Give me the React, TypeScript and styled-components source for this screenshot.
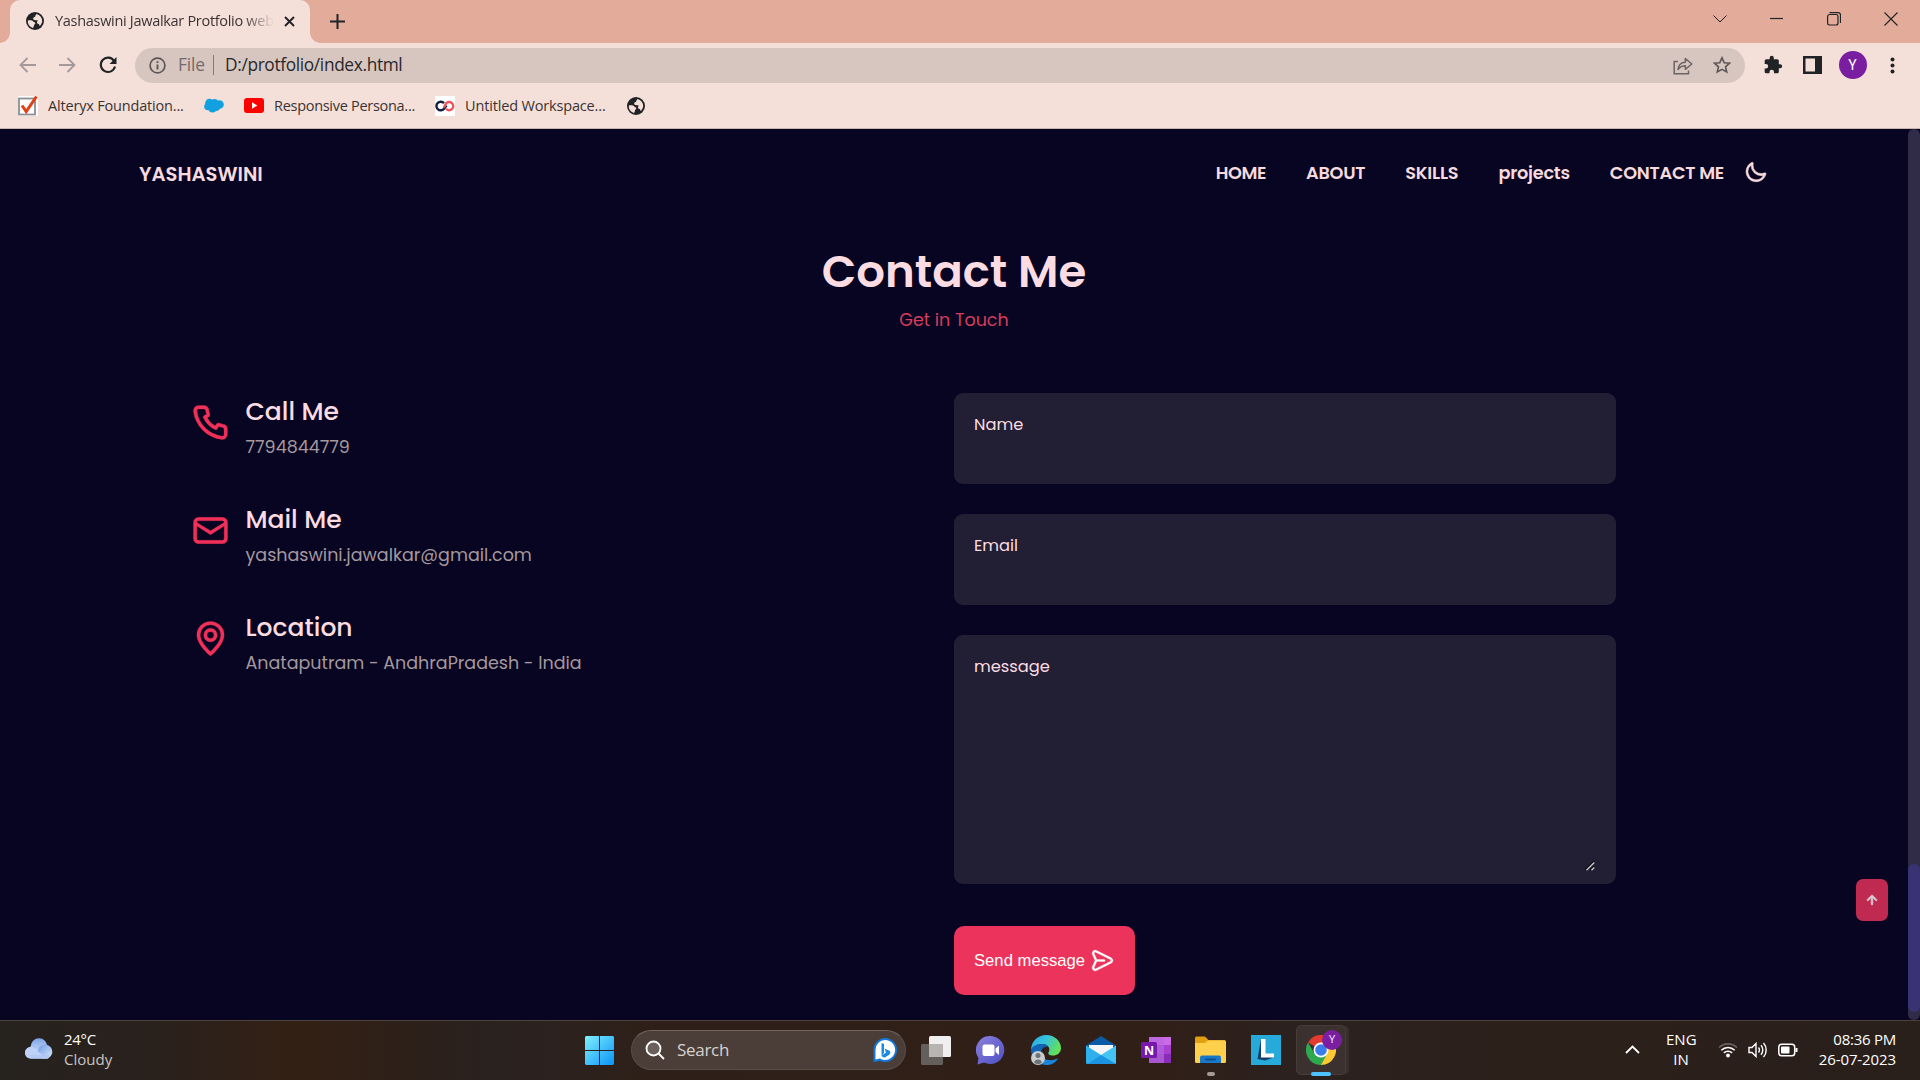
import React from "react";
import styled, { createGlobalStyle } from "styled-components";

const poppins = `Poppins, Inter, "Liberation Sans", sans-serif`;
const segoe = `"Segoe UI", "Open Sans", "Noto Sans", sans-serif`;

const GlobalStyle = createGlobalStyle`
  * { box-sizing: border-box; margin: 0; padding: 0; }
  body { width: 1920px; height: 1080px; overflow: hidden; background: #070521; }
`;

const Screen = styled.div`
  width: 1920px;
  height: 1080px;
  display: flex;
  flex-direction: column;
  overflow: hidden;
`;

const Text = styled.span<{ $ls?: number }>`
  letter-spacing: ${(p) => p.$ls ?? 0}px;
  white-space: nowrap;
`;

/* ---------- browser chrome ---------- */

const TabStrip = styled.div`
  height: 43px;
  display: flex;
  align-items: stretch;
  background: #e3ac9a;
`;

const Tab = styled.div`
  position: relative;
  margin-left: 10px;
  width: 300px;
  display: flex;
  align-items: center;
  padding: 0 14px 1px 16px;
  background: #f5e0d9;
  border-radius: 10px 10px 0 0;
  &::before, &::after {
    content: "";
    position: absolute;
    bottom: 0;
    width: 10px;
    height: 10px;
  }
  &::before { left: -10px; background: radial-gradient(circle at 0 0, #e3ac9a 9.5px, #f5e0d9 10px); }
  &::after { right: -10px; background: radial-gradient(circle at 100% 0, #e3ac9a 9.5px, #f5e0d9 10px); }
`;

const TabTitle = styled.div`
  width: 219px;
  margin-left: 11px;
  margin-right: 10px;
  white-space: nowrap;
  font: 14.5px/22px ${segoe};
  color: #3a3334;
  -webkit-mask-image: linear-gradient(90deg, #000 86%, transparent 100%);
  mask-image: linear-gradient(90deg, #000 86%, transparent 100%);
`;

const NewTab = styled.div`
  display: flex;
  align-items: center;
  margin-left: 20px;
  padding-bottom: 1px;
`;

const WindowControls = styled.div`
  margin-left: auto;
  display: flex;
  align-items: center;
  padding: 0 1px 6px 0;
`;

const WindowButton = styled.div<{ $w: number }>`
  width: ${(p) => p.$w}px;
  display: flex;
  justify-content: center;
`;

const Toolbar = styled.div`
  height: 44px;
  display: flex;
  align-items: center;
  padding-left: 15px;
  background: #f5e0d9;
`;

const ToolButton = styled.div<{ $w: number; $after?: number }>`
  width: ${(p) => p.$w}px;
  margin-right: ${(p) => p.$after ?? 0}px;
  display: flex;
  justify-content: center;
  flex: none;
`;

const Omnibox = styled.div`
  width: 1610px;
  height: 35px;
  border-radius: 18px;
  background: #d7c6bf;
  display: flex;
  align-items: center;
  padding: 0 14px 0 14px;
  font: 17.3px/24px ${segoe};
  color: #27282b;
`;

const Scheme = styled(Text)`
  margin-left: 12px;
  width: 35px;
  color: #74696a;
`;

const SchemeBar = styled.div`
  width: 1px;
  height: 20px;
  background: #83797a;
  margin-right: 11px;
`;

const OmniActions = styled.div`
  margin-left: auto;
  display: flex;
  gap: 20px;
  align-items: center;
`;

const Avatar = styled.div`
  width: 28px;
  height: 28px;
  border-radius: 50%;
  background: #7a1ea1;
  color: #fff;
  font: 14px/28px Roboto, sans-serif;
  text-align: center;
`;

const Bookmarks = styled.div`
  height: 42px;
  display: flex;
  align-items: center;
  padding: 0 0 4px 18px;
  background: #f5e0d9;
  border-bottom: 1px solid #c6b5af;
  font: 14.5px/22px ${segoe};
  color: #3a3334;
`;

const Bookmark = styled.div<{ $w: number }>`
  width: ${(p) => p.$w}px;
  display: flex;
  align-items: center;
  gap: 10px;
`;

/* ---------- page ---------- */

const Viewport = styled.div`
  height: 891px;
  display: flex;
  background: #070521;
  font-family: ${poppins};
  color: #fbdce2;
`;

const Page = styled.main`
  width: 1908px;
  position: relative;
`;

const Nav = styled.nav`
  height: 89px;
  padding: 0 140px 0 139px;
  display: flex;
  align-items: center;
  justify-content: space-between;
`;

const Logo = styled(Text)`
  font-size: 19.6px;
  font-weight: 600;
  color: #f6dadf;
`;

const NavLinks = styled.div`
  display: flex;
  align-items: center;
  gap: 40px;
  padding-bottom: 2px;
  font-size: 17.7px;
  font-weight: 600;
  color: #f6dadf;
`;

const ThemeToggle = styled.div`
  display: flex;
  width: 24px;
  margin-left: -20px;
  margin-top: -2px;
`;

const Heading = styled.header`
  display: flex;
  flex-direction: column;
  align-items: center;
  padding-top: 18px;
`;

const Title = styled.h1`
  font-size: 45px;
  line-height: 72px;
  height: 70px;
  font-weight: 600;
`;

const Subtitle = styled.p`
  font-size: 17.5px;
  line-height: 28px;
  color: #d93c5e;
`;

const Columns = styled.section`
  display: grid;
  grid-template-columns: 764px 662px;
  padding: 59px 0 0 190px;
`;

const ContactList = styled.div`
  display: flex;
  flex-direction: column;
`;

const ContactItem = styled.div`
  height: 108px;
  display: grid;
  grid-template-columns: 55.5px 1fr;
  svg { margin-top: 9px; }
`;

const ContactTitle = styled.h3`
  font-size: 25px;
  line-height: 38px;
  font-weight: 500;
`;

const ContactSub = styled.p`
  font-size: 17.5px;
  line-height: 30px;
  padding-top: 1px;
  color: #a5989f;
`;

const Form = styled.form`
  display: flex;
  flex-direction: column;
  gap: 30px;
`;

const Field = styled.label<{ $h: number }>`
  height: ${(p) => p.$h}px;
  display: flex;
  flex-direction: column;
  justify-content: space-between;
  padding: 20px;
  border-radius: 9px;
  background: #221e34;
  font-size: 16.25px;
  line-height: 24px;
`;

const Grip = styled.div`
  display: flex;
  justify-content: flex-end;
  margin: 0 1px -7px 0;
`;

const SendButton = styled.div`
  margin-top: 12px;
  width: 181px;
  height: 69px;
  border-radius: 10px;
  background: #ec335b;
  color: #fff;
  display: flex;
  align-items: center;
  gap: 5px;
  padding-left: 20px;
  font: 16.67px/24px "Liberation Sans", Arial, sans-serif;
  svg { margin-bottom: 1px; }
`;

const ScrollUp = styled.div`
  position: absolute;
  right: 20px;
  bottom: 99px;
  width: 32px;
  height: 42px;
  border-radius: 7px;
  background: #c02a50;
  display: flex;
  align-items: center;
  justify-content: center;
`;

const ScrollTrack = styled.div`
  width: 12px;
  border-radius: 8px;
  background: #302c48;
  padding-top: 735px;
`;

const ScrollThumb = styled.div`
  height: 148px;
  border-radius: 8px;
  background: #393373;
`;

/* ---------- taskbar ---------- */

const Taskbar = styled.footer`
  height: 60px;
  display: grid;
  grid-template-columns: 572px 776px 572px;
  border-top: 1px solid #4a423b;
  background: linear-gradient(90deg, #26221f 0, #2a211c 160px, #332014 300px, #2b201b 440px, #2a2220 500px, #2e2019 640px, #301f17 1150px, #2b211e 1290px, #2c201a 1550px, #291f1b 1920px);
  color: #fff;
  font: 15px/20px ${segoe};
`;

const Weather = styled.div`
  display: flex;
  align-items: center;
  gap: 9px;
  padding: 0 0 4px 25px;
`;

const Stack = styled.div<{ $align: string }>`
  display: flex;
  flex-direction: column;
  align-items: ${(p) => p.$align};
`;

const Muted = styled(Text)`
  color: #c9c4c1;
`;

const Apps = styled.div`
  display: flex;
  align-items: center;
  padding-bottom: 1px;
`;

const AppSlot = styled.div`
  position: relative;
  width: 55px;
  height: 58px;
  display: flex;
  align-items: center;
  justify-content: center;
  flex: none;
`;

const ActivePlate = styled.div`
  position: absolute;
  inset: 4px 2px 4px 3px;
  border-radius: 5px;
  background: #3b322f;
  border: 1px solid #463d39;
  box-shadow: 4px 0 0 -1px #382f2b;
`;

const Indicator = styled.div<{ $w: number; $c: string }>`
  position: absolute;
  bottom: 3px;
  left: 50%;
  margin-left: ${(p) => -p.$w / 2}px;
  width: ${(p) => p.$w}px;
  height: 4px;
  border-radius: 2px;
  background: ${(p) => p.$c};
`;

const Badge = styled.div`
  position: absolute;
  left: 29px;
  top: 9px;
  width: 20px;
  height: 20px;
  border-radius: 50%;
  background: #7b1fa2;
  color: #eadcf0;
  font: 11px/20px Roboto, sans-serif;
  text-align: center;
`;

const AppIcon = styled.svg`
  position: relative;
  display: block;
`;

const SearchBox = styled.div`
  width: 275px;
  height: 40px;
  margin: 0 2px 0 4px;
  border-radius: 20px;
  background: #4b3e39;
  border: 1px solid #5a4d48;
  border-top-color: #74665f;
  display: flex;
  align-items: center;
  padding: 0 7px 0 13px;
  font-size: 17px;
  color: #d8d2cf;
`;

const SearchLabel = styled(Text)`
  margin-left: 12px;
  flex: 1;
`;

const Tray = styled.div`
  display: flex;
  align-items: center;
  justify-content: flex-end;
  padding: 0 24px 3px 0;
`;

const TrayIcons = styled.div`
  display: flex;
  gap: 10px;
  margin: 2px 0 0 22px;
`;

const Lang = styled(Text)`
  width: 30px;
  margin-left: 26px;
  text-align: center;
`;

const Clock = styled(Stack)`
  width: 98px;
`;

/* ---------- icons ---------- */

const Unicon = ({ d, size, color, bold = 0 }: { d: string; size: number; color: string; bold?: number }) => (
  <svg width={size} height={size} viewBox="0 0 24 24" fill={color} stroke={color} strokeWidth={bold}>
    <path d={d} />
  </svg>
);

const paths = {
  phone:
    "M19.44,13c-.22,0-.45-.07-.67-.12a9.44,9.44,0,0,1-1.31-.39,2,2,0,0,0-2.48,1l-.22.45a12.18,12.18,0,0,1-2.66-2,12.18,12.18,0,0,1-2-2.66L10.52,9a2,2,0,0,0,1-2.48,10.33,10.33,0,0,1-.39-1.31c-.05-.22-.09-.45-.12-.68a3,3,0,0,0-3-2.49h-3a3,3,0,0,0-3,3.41A19,19,0,0,0,18.53,21.91l.38,0a3,3,0,0,0,2-.76,3,3,0,0,0,1-2.25v-3A3,3,0,0,0,19.44,13Zm.5,6a1,1,0,0,1-.34.75,1.05,1.05,0,0,1-.82.25A17,17,0,0,1,4.07,5.22a1.09,1.09,0,0,1,.25-.82,1,1,0,0,1,.75-.34h3a1,1,0,0,1,1,.79q.06.41.15.81a11.12,11.12,0,0,0,.46,1.55l-1.4.65a1,1,0,0,0-.49,1.33,14.49,14.49,0,0,0,7,7,1,1,0,0,0,.76,0,1,1,0,0,0,.57-.52l.62-1.4a13.69,13.69,0,0,0,1.58.46q.4.09.81.15a1,1,0,0,1,.79,1Z",
  mail: "M19,4.3H5a3,3,0,0,0-3,3V16.7a3,3,0,0,0,3,3H19a3,3,0,0,0,3-3V7.3A3,3,0,0,0,19,4.3ZM5,6.3H19a1,1,0,0,1,1,1L12,12.2,4,7.3A1,1,0,0,1,5,6.3ZM20,16.7a1,1,0,0,1-1,1H5a1,1,0,0,1-1-1V9.3l7.5,4.9a1,1,0,0,0,1,0L20,9.3Z",
  pin: "M12,2A8,8,0,0,0,4,9.92c0,5.48,7.05,11.58,7.35,11.84a1,1,0,0,0,1.3,0C13,21.5,20,15.4,20,9.92A8,8,0,0,0,12,2Zm0,17.65c-1.67-1.59-6-6-6-9.73a6,6,0,0,1,12,0C18,13.7,13.67,18.06,12,19.65ZM12,6a4,4,0,1,0,4,4A4,4,0,0,0,12,6Zm0,6a2,2,0,1,1,2-2A2,2,0,0,1,12,12Z",
  send: "M20.34,9.32l-14-7a3,3,0,0,0-4.08,3.9l2.4,5.37h0a1.06,1.06,0,0,1,0,.82l-2.4,5.37A3,3,0,0,0,5,22a3.14,3.14,0,0,0,1.35-.32l14-7a3,3,0,0,0,0-5.36Zm-.89,3.57-14,7a1,1,0,0,1-1.35-1.3l2.39-5.37A2,2,0,0,0,6.57,13h6.89a1,1,0,0,0,0-2H6.57a2,2,0,0,0-.08-.22L4.1,5.41a1,1,0,0,1,1.35-1.3l14,7a1,1,0,0,1,0,1.78Z",
  moon: "M21.64,13a1,1,0,0,0-1.05-.14,8.05,8.05,0,0,1-3.37.73A8.15,8.15,0,0,1,9.08,5.49a8.59,8.59,0,0,1,.25-2A1,1,0,0,0,8,2.36,10.14,10.14,0,1,0,22,14.05,1,1,0,0,0,21.64,13Zm-9.5,6.69A8.14,8.14,0,0,1,7.08,5.22v.27A10.15,10.15,0,0,0,17.22,15.63a9.79,9.79,0,0,0,2.1-.22A8.11,8.11,0,0,1,12.14,19.73Z",
  up: "M17.71,11.29l-5-5a1,1,0,0,0-.33-.21,1,1,0,0,0-.76,0,1,1,0,0,0-.33.21l-5,5a1,1,0,0,0,1.42,1.42L11,9.41V17a1,1,0,0,0,2,0V9.41l3.29,3.3a1,1,0,0,0,1.42,0A1,1,0,0,0,17.71,11.29Z",
};

const Globe = () => (
  <svg width="18" height="18" viewBox="0 0 18 18">
    <circle cx="9" cy="9" r="9" fill="#202225" />
    <path d="M1.8 8.500C4.500 8 6.600 8.400 7.400 9.700 8 10.300 9.300 10.200 9.300 11.200 9.300 12.300 8.200 12.200 8 13.200 7.900 14.300 7.600 15.300 6.900 15.900A7.200 7.200 0 0 1 1.800 8.500Z" fill="#f5e0d9" />
    <path d="M10.500 2A7.200 7.200 0 0 1 16.200 9.500C15.800 11.300 15 12.800 13.800 13.900 13 13.500 13.600 12.300 12.700 11.900 11.700 11.900 10.800 11.300 11 10.200 11.100 9 12.200 9 11.400 8.200 10.300 8 8.600 8.600 7.400 7.500 6.800 6.300 7.500 5.200 8.700 5 9.700 4.700 9 3.300 10.500 2Z" fill="#f5e0d9" />
  </svg>
);

const Stroke = ({ w, h, d, sw = 1.6, c = "#202225" }: { w: number; h: number; d: string; sw?: number; c?: string }) => (
  <svg width={w} height={h} viewBox={`0 0 ${w} ${h}`} fill="none" stroke={c} strokeWidth={sw}>
    <path d={d} />
  </svg>
);

const contacts = [
  { icon: paths.phone, title: "Call Me", sub: "7794844779" },
  { icon: paths.mail, title: "Mail Me", sub: "yashaswini.jawalkar@gmail.com" },
  { icon: paths.pin, title: "Location", sub: "Anataputram - AndhraPradesh - India" },
];

const links = [
  { label: "HOME", ls: -0.4 },
  { label: "ABOUT", ls: -0.25 },
  { label: "SKILLS", ls: -0.2 },
  { label: "projects", ls: -0.25 },
  { label: "CONTACT ME", ls: -0.25 },
];

const Browser = () => (
  <>
    <TabStrip>
      <Tab>
        <Globe />
        <TabTitle><Text $ls={-0.3}>Yashaswini Jawalkar Protfolio web</Text></TabTitle>
        <Stroke w={11} h={11} d="M1 1 10 10M10 1 1 10" sw={1.9} />
      </Tab>
      <NewTab><Stroke w={15} h={15} d="M7.500 0V15M0 7.500H15" sw={2} /></NewTab>
      <WindowControls>
        <WindowButton $w={57}><Stroke w={14} h={8} d="M.5.5 7 7 13.500.5" sw={1} /></WindowButton>
        <WindowButton $w={57}><Stroke w={14} h={3} d="M0 1.500H13" sw={1.2} /></WindowButton>
        <WindowButton $w={57}><Stroke w={14} h={14} d="M2.500.6H11a2.500 2.500 0 0 1 2.500 2.500V11M2.500 2.500H9A2 2 0 0 1 11 4.500V11A2 2 0 0 1 9 13H2.500A2 2 0 0 1 .6 11V4.500A2 2 0 0 1 2.500 2.500Z" sw={1.2} /></WindowButton>
        <WindowButton $w={57}><Stroke w={14} h={14} d="M.5.5 13.500 13.500M13.500.5.5 13.500" sw={1.1} /></WindowButton>
      </WindowControls>
    </TabStrip>
    <Toolbar>
      <ToolButton $w={25}><Stroke w={18} h={16} d="M17 8H1.500M8.500 1 1.500 8 8.500 15" sw={1.8} c="#a4989a" /></ToolButton>
      <ToolButton $w={54}><Stroke w={18} h={16} d="M1 8H16.500M9.500 1 16.500 8 9.500 15" sw={1.8} c="#a4989a" /></ToolButton>
      <ToolButton $w={27} $after={14}>
        <svg width="18" height="18" viewBox="0 0 18 18">
          <path d="M15 4.800A7.200 7.200 0 1 0 16 10.500" fill="none" stroke="#202225" strokeWidth="2.100" />
          <path d="M17.500 1V8H10.500Z" fill="#202225" />
        </svg>
      </ToolButton>
      <Omnibox>
        <svg width="17" height="17" viewBox="0 0 17 17" fill="none" stroke="#5d5658" strokeWidth="1.700">
          <circle cx="8.500" cy="8.500" r="7.400" />
          <path d="M8.500 7.500V12.500M8.500 4.300V6" strokeWidth="1.900" />
        </svg>
        <Scheme $ls={-0.1}>File</Scheme>
        <SchemeBar />
        <Text $ls={-0.34}>D:/protfolio/index.html</Text>
        <OmniActions>
          <svg width="20" height="19" viewBox="0 0 20 19" fill="none" stroke="#6c6465" strokeWidth="1.500">
            <path d="M5 5.500H1.200V17.800H15.500V14.500" />
            <path d="M5 13.500C5.500 9 8 6.500 12.300 6.300V2.500L18.800 8 12.300 13.300V9.800C9 9.800 7 11 5 13.500Z" strokeLinejoin="round" />
          </svg>
          <svg width="18" height="18" viewBox="0 0 18 18" fill="none" stroke="#5d5658" strokeWidth="1.600">
            <path d="M9 1.800 11.200 6.700 16.500 7.200 12.500 10.800 13.700 16 9 13.300 4.300 16 5.500 10.800 1.500 7.200 6.800 6.700Z" />
          </svg>
        </OmniActions>
      </Omnibox>
      <ToolButton $w={55}>
        <svg width="20" height="20" viewBox="0 0 24 24" fill="#202225">
          <path d="M20.500 11H19V7a2 2 0 0 0-2-2h-4V3.500a2.500 2.500 0 0 0-5 0V5H4a2 2 0 0 0-2 2v3.800h1.500a2.700 2.700 0 0 1 0 5.400H2V20a2 2 0 0 0 2 2h3.800v-1.500a2.700 2.700 0 0 1 5.400 0V22H17a2 2 0 0 0 2-2v-4h1.500a2.500 2.500 0 0 0 0-5Z" />
        </svg>
      </ToolButton>
      <ToolButton $w={24}>
        <svg width="19" height="18" viewBox="0 0 19 18"><path fillRule="evenodd" fill="#202225" d="M0 0H19V18H0ZM2.500 2.500V15.500H12V2.500Z" /></svg>
      </ToolButton>
      <ToolButton $w={57}><Avatar>Y</Avatar></ToolButton>
      <ToolButton $w={22}>
        <svg width="5" height="17" viewBox="0 0 5 17" fill="#202225"><circle cx="2.500" cy="2.500" r="2" /><circle cx="2.500" cy="8.500" r="2" /><circle cx="2.500" cy="14.500" r="2" /></svg>
      </ToolButton>
    </Toolbar>
    <Bookmarks>
      <Bookmark $w={186}>
        <svg width="20" height="20" viewBox="0 0 20 20">
          <rect width="20" height="20" fill="#fff" />
          <rect x="1" y="2.500" width="16" height="16" fill="#fff" stroke="#8b9096" strokeWidth="1.800" />
          <path d="M4 9.500 8.200 15.500 18.500.5" fill="none" stroke="#e04214" strokeWidth="3" />
        </svg>
        <Text $ls={-0.18}>Alteryx Foundation...</Text>
      </Bookmark>
      <Bookmark $w={40}>
        <svg width="20" height="15" viewBox="0 0 20 15" fill="#12a0e0">
          <circle cx="5.500" cy="5" r="4.300" /><circle cx="10.500" cy="4.800" r="3.800" /><circle cx="15.500" cy="6.500" r="4.300" /><circle cx="4" cy="8.500" r="3.800" /><circle cx="8.500" cy="10.500" r="4" /><circle cx="12" cy="9" r="4" />
        </svg>
      </Bookmark>
      <Bookmark $w={191}>
        <svg width="20" height="15" viewBox="0 0 20 15"><rect width="20" height="15" rx="3" fill="#f00" /><path d="M8 4.300V10.700L13.300 7.500Z" fill="#fff" /></svg>
        <Text $ls={-0.29}>Responsive Persona...</Text>
      </Bookmark>
      <Bookmark $w={192}>
        <svg width="20" height="20" viewBox="0 0 20 20" fill="none" strokeWidth="2.400">
          <rect width="20" height="20" fill="#fff" />
          <path d="M9 7.200A4.300 4.300 0 1 0 9 12.800L11.500 9.500" stroke="#10203f" />
          <path d="M9 11.500 11 7.500A4.100 4.100 0 1 1 11 12.800" stroke="#f2545b" />
        </svg>
        <Text $ls={-0.16}>Untitled Workspace...</Text>
      </Bookmark>
      <Globe />
    </Bookmarks>
  </>
);

const Contact = () => (
  <Viewport>
    <Page>
      <Nav>
        <Logo>YASHASWINI</Logo>
        <NavLinks>
          {links.map((l) => <Text key={l.label} $ls={l.ls}>{l.label}</Text>)}
          <ThemeToggle><Unicon d={paths.moon} size={26} color="#f6dadf" bold={0.5} /></ThemeToggle>
        </NavLinks>
      </Nav>
      <Heading>
        <Title>Contact Me</Title>
        <Subtitle>Get in Touch</Subtitle>
      </Heading>
      <Columns>
        <ContactList>
          {contacts.map((c) => (
            <ContactItem key={c.title}>
              <Unicon d={c.icon} size={41} color="#f03058" bold={0.15} />
              <div>
                <ContactTitle>{c.title}</ContactTitle>
                <ContactSub>{c.sub}</ContactSub>
              </div>
            </ContactItem>
          ))}
        </ContactList>
        <Form>
          <Field $h={91}><Text>Name</Text></Field>
          <Field $h={91}><Text>Email</Text></Field>
          <Field $h={249}>
            <Text>message</Text>
            <Grip>
              <svg width="10" height="10" viewBox="0 0 10 10" fill="none" strokeWidth="1.300">
                <path d="M0 9 9 0M5 9 9 5" stroke="#111" />
                <path d="M1.500 9.300 9.300 1.500M6.500 9.300 9.300 6.500" stroke="#c9c7cf" />
              </svg>
            </Grip>
          </Field>
          <SendButton>
            <Text>Send message</Text>
            <Unicon d={paths.send} size={25} color="#fff" bold={0.3} />
          </SendButton>
        </Form>
      </Columns>
      <ScrollUp><Unicon d={paths.up} size={20} color="#d9ccd5" bold={0.7} /></ScrollUp>
    </Page>
    <ScrollTrack><ScrollThumb /></ScrollTrack>
  </Viewport>
);

const Bottom = () => (
  <Taskbar>
    <Weather>
      <svg width="30" height="21" viewBox="0 0 30 21">
        <defs>
          <linearGradient id="cl" x1="0" y1="0" x2="0" y2="1"><stop offset="0" stopColor="#7fa5e6" /><stop offset="1" stopColor="#cfe0fa" /></linearGradient>
          <linearGradient id="cl2" x1="0" y1="0" x2="1" y2="1"><stop offset="0" stopColor="#6f9ae6" /><stop offset="1" stopColor="#dbe8fb" /></linearGradient>
        </defs>
        <circle cx="14" cy="8.500" r="8.300" fill="url(#cl)" />
        <path d="M21 20.500H17A7.300 7.300 0 1 1 23 20.500Z" fill="url(#cl2)" />
        <path d="M6 20.800A6 6 0 1 1 10.500 11Q14 15 23 20.800Z" fill="#bdd2f6" />
        <path d="M5 17H25L23 20.800H6Z" fill="#a9c3f1" fillOpacity=".6" />
      </svg>
      <Stack $align="flex-start"><Text $ls={-0.3}>24°C</Text><Muted>Cloudy</Muted></Stack>
    </Weather>
    <Apps>
      <AppSlot>
        <AppIcon width="29" height="29" viewBox="0 0 29 29">
          <defs><linearGradient id="wn" x1="0" y1="0" x2="1" y2="1"><stop offset="0" stopColor="#7ff0ff" /><stop offset="1" stopColor="#0a94f5" /></linearGradient></defs>
          <path d="M1 0H14V14H0V1ZM15 0H28L29 1V14H15ZM0 15H14V29H1L0 28ZM15 15H29V28L28 29H15Z" fill="url(#wn)" />
        </AppIcon>
      </AppSlot>
      <SearchBox>
        <AppIcon width="20" height="20" viewBox="0 0 20 20" fill="#6b5f5b" stroke="#fff" strokeWidth="1.800"><circle cx="8.500" cy="8.500" r="7" /><path d="M13.500 13.500 19 19" /></AppIcon>
        <SearchLabel $ls={-0.3}>Search</SearchLabel>
        <AppIcon width="26" height="26" viewBox="0 0 26 26">
          <path d="M13 1a12 12 0 1 1-5 22.900L1.500 25V13A12 12 0 0 1 13 1Z" fill="#1478d8" />
          <path d="M13 3a10 10 0 1 1-5 18.600L3.500 22.500V13A10 10 0 0 1 13 3Z" fill="#fff" />
          <path d="M9.500 6 12 7V16L9.500 18.500ZM12.500 11.500 18 14A3 3 0 0 1 17.500 17.500L13 20.500Q10.500 21 9.500 18.500L14 15.500Z" fill="#1a8be0" />
        </AppIcon>
      </SearchBox>
      <AppSlot>
        <AppIcon width="30" height="29" viewBox="0 0 30 29"><rect x="8" width="22" height="21" rx="1.500" fill="#f0eeee" /><rect y="8" width="22" height="21" rx="1.500" fill="#6f6b69" fillOpacity=".85" /><rect x="8" y="8" width="14" height="13" fill="#b8b4b2" /></AppIcon>
      </AppSlot>
      <AppSlot>
        <AppIcon width="29" height="29" viewBox="0 0 29 29">
          <defs><linearGradient id="ch" x1="0" y1="0" x2="1" y2="1"><stop offset="0" stopColor="#8d80dd" /><stop offset="1" stopColor="#4c50c4" /></linearGradient></defs>
          <path d="M14.500 0A14 14 0 1 1 8 26.500L1.500 28.500 2.500 22A14 14 0 0 1 14.500 0Z" fill="url(#ch)" />
          <rect x="6.500" y="8.500" width="12" height="11.500" rx="2" fill="#fff" /><path d="M19.500 12.500 23 9.500V19L19.500 16Z" fill="#fff" />
        </AppIcon>
      </AppSlot>
      <AppSlot>
        <AppIcon width="30" height="30" viewBox="0 0 30 30">
          <defs>
            <linearGradient id="eg" x1="0" y1="0" x2="1" y2=".4"><stop offset="0" stopColor="#2aa6e8" /><stop offset=".5" stopColor="#35c2dd" /><stop offset="1" stopColor="#63e05a" /></linearGradient>
          </defs>
          <path d="M15 0C24 0 30 6.500 30 13 30 18 26 20.500 22 20.500 18.500 20.500 16.500 19 17.500 17.500 20 13.500 17 9 11.500 9 6 9 1 12 0 15 0 6.500 7 0 15 0Z" fill="url(#eg)" />
          <path d="M0 15C1 12 5 9 11.500 9 14 9 16 10 17 11.500 13 11 10 14 10 18 10 24 17 28 27 23.500 24 28 20 30 15 30 6 30 0 23 0 15Z" fill="#1065b8" />
          <path d="M10 18C10 23 17 28 27 23.500 24 28 20 30 15 30 11 29 8 24 10 18Z" fill="#1b86d8" />
          <circle cx="7" cy="23" r="7" fill="#c9cbcd" /><circle cx="7" cy="20.500" r="2.500" fill="#6d7277" /><path d="M3 27.500A4.200 4.200 0 0 1 11 27.500Q7 31 3 27.500Z" fill="#6d7277" />
        </AppIcon>
      </AppSlot>
      <AppSlot>
        <AppIcon width="30" height="28" viewBox="0 0 30 28">
          <path d="M0 9.500 15 0 30 9.500V14H0Z" fill="#0a5aa5" /><path d="M3 9H27V16L15 22 3 16Z" fill="#f3f5f7" />
          <path d="M0 9.500 15 19 30 28H1.500Q0 28 0 26.500Z" fill="#2fb0ee" /><path d="M30 9.500 15 19 2 28H28.500Q30 28 30 26.500Z" fill="#43c4f5" /><path d="M15 19 30 28H1.500Z" fill="#1d94e2" />
        </AppIcon>
      </AppSlot>
      <AppSlot>
        <AppIcon width="30" height="28" viewBox="0 0 30 28">
          <path d="M8 1H30V9H8Z" fill="#cb6ae6" /><path d="M8 9H30V18H8Z" fill="#a83fd0" /><path d="M8 18H30V27H8Z" fill="#8a2cba" /><path d="M8 1H23V27H8Z" fill="#b768dc" fillOpacity=".7" /><rect y="6" width="16" height="16" rx="1.500" fill="#7719aa" />
          <text x="8" y="18.500" textAnchor="middle" fill="#fff" fontFamily="Open Sans, sans-serif" fontWeight="700" fontSize="12.500">N</text>
        </AppIcon>
      </AppSlot>
      <AppSlot>
        <AppIcon width="31" height="28" viewBox="0 0 31 28">
          <path d="M0 2Q0 .5 1.500.5H10L13.500 4H29Q31 4 31 6V12H0Z" fill="#e0a010" /><path d="M0 7H10L13 4.500H29.500Q31 4.500 31 6V25.500Q31 27 29.500 27H1.500Q0 27 0 25.500Z" fill="#ffd04c" /><path d="M5 27V21.500Q5 19.500 7 19.500H24Q26 19.500 26 21.500V27Z" fill="#1879c8" /><rect x="10" y="22.500" width="11" height="2" rx="1" fill="#0d4f90" />
        </AppIcon>
        <Indicator $w={8} $c="#a39a96" />
      </AppSlot>
      <AppSlot>
        <AppIcon width="30" height="30" viewBox="0 0 30 30"><rect width="30" height="30" fill="#27aad9" /><path d="M10 4 6.500 24 14 25.500 24 22H12Z" fill="#123f68" /><path d="M10 4H14.500V18.500H23V22.500H10Z" fill="#fff" /></AppIcon>
      </AppSlot>
      <AppSlot>
        <ActivePlate />
        <AppIcon width="30" height="30" viewBox="0 0 30 30">
          <path d="M15 15 2 7.500A15 15 0 0 1 28 7.500Z" fill="#e33b2e" /><path d="M15 15V7.500H28A15 15 0 0 1 15 30Z" fill="#fcc934" /><path d="M2 7.500 8.500 18.800 15 22 21 19 15 30A15 15 0 0 1 2 7.500Z" fill="#2da94f" /><circle cx="15" cy="15" r="7.500" fill="#fff" /><circle cx="15" cy="15" r="5.800" fill="#3b7ded" />
        </AppIcon>
        <Badge>Y</Badge>
        <Indicator $w={20} $c="#4cc2ff" />
      </AppSlot>
    </Apps>
    <Tray>
      <Stroke w={15} h={9} d="M1 8 7.500 1.500 14 8" sw={1.8} c="#fff" />
      <Stack $align="center"><Lang>ENG</Lang><Lang>IN</Lang></Stack>
      <TrayIcons>
        <svg width="20" height="16" viewBox="0 0 20 16" fill="none" strokeWidth="1.600">
          <path d="M1 5.500A13 13 0 0 1 19 5.500" stroke="#6b625e" /><path d="M3.300 8.200A9.500 9.500 0 0 1 16.700 8.200M5.900 10.900A5.800 5.800 0 0 1 14.100 10.900" stroke="#fff" /><circle cx="10" cy="13.500" r="1.900" fill="#fff" />
        </svg>
        <svg width="20" height="16" viewBox="0 0 20 16" fill="none" stroke="#fff" strokeWidth="1.400">
          <path d="M1 5.500H4L8 1.500V14.500L4 10.500H1ZM10.500 5.500A4 4 0 0 1 10.500 10.500M13 3.300A7 7 0 0 1 13 12.700M15.500 1A10.500 10.500 0 0 1 15.500 15" />
        </svg>
        <svg width="20" height="16" viewBox="0 0 20 16">
          <rect x=".8" y="2.300" width="15.900" height="11.400" rx="2.800" fill="none" stroke="#fff" strokeWidth="1.500" /><rect x="3" y="4.500" width="8.500" height="7" rx="1" fill="#fff" /><path d="M17.500 6H19.500V10H17.500Z" fill="#fff" />
        </svg>
      </TrayIcons>
      <Clock $align="flex-end"><Text $ls={-0.25}>08:36 PM</Text><Text $ls={-0.1}>26-07-2023</Text></Clock>
    </Tray>
  </Taskbar>
);

export default function App() {
  return (
    <Screen>
      <GlobalStyle />
      <Browser />
      <Contact />
      <Bottom />
    </Screen>
  );
}
